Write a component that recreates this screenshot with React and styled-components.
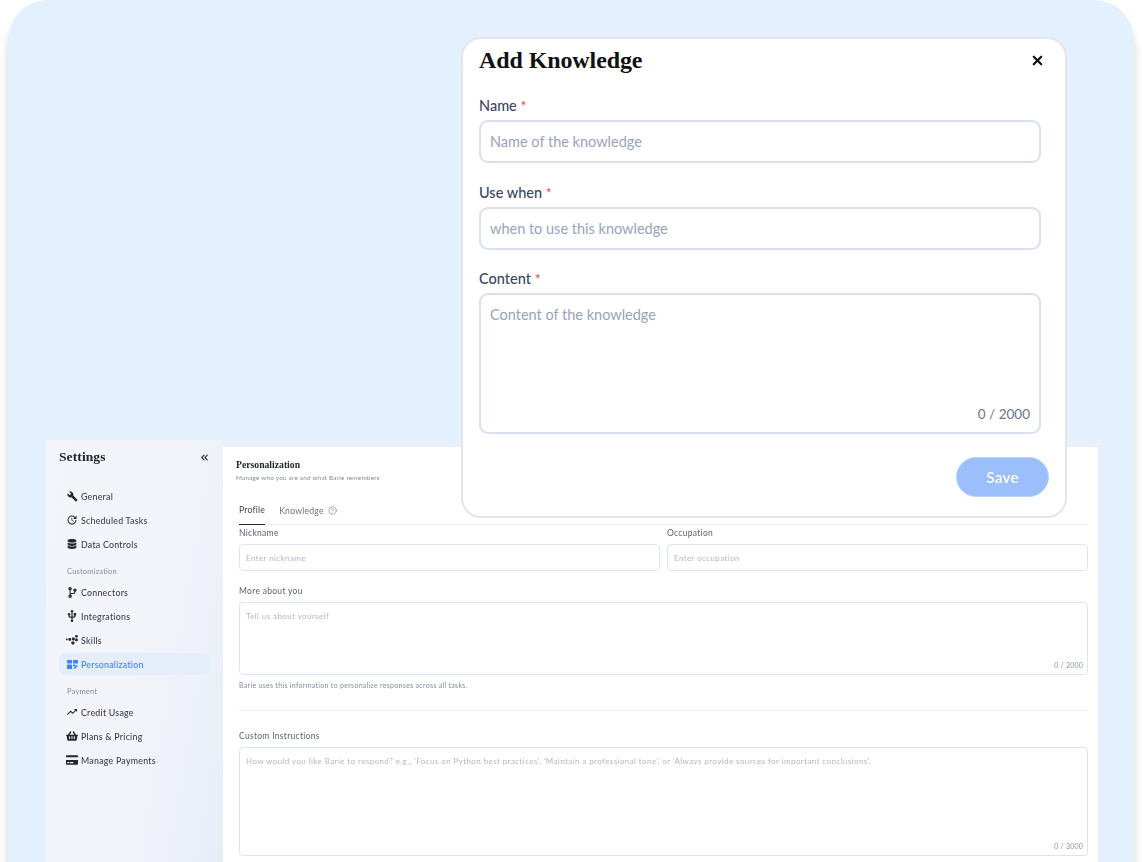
import React from 'react';
import styled, { createGlobalStyle } from 'styled-components';
import { MdBuild, MdUpdate, MdUsb, MdTrendingUp } from 'react-icons/md';
import { FaDatabase, FaCodeBranch, FaShoppingBasket, FaCreditCard } from 'react-icons/fa';
import { CircleHelp, ChevronsLeft, X } from 'lucide-react';

const UI_FONT = `Lato, 'Noto Sans', sans-serif`;
const TITLE_FONT = `'Liberation Serif', serif`;

const GlobalStyle = createGlobalStyle`
  html, body {
    margin: 0;
    height: 862px;
    background: #fff;
    overflow: hidden;
    font-family: ${UI_FONT};
  }
  * { box-sizing: border-box; }
`;

const Frame = styled.div`
  position: relative;
  width: 1126px;
  height: 862px;
  margin-left: 8px;
  padding: 440px 36px 0 38px;
  background: #e3f0fe;
  border-radius: 40px 40px 0 0;
  box-shadow: 0 12px 8px rgba(120, 120, 130, 0.35);
`;

/* the app behind the modal is a scaled down shot, so its text is soft */
const Window = styled.div`
  display: flex;
  height: 422px;
  background: #eaf0fa;
  filter: blur(0.4px);
`;

const Sidebar = styled.aside`
  width: 177px;
  flex-shrink: 0;
  padding: 10px 13px 0;
  background: linear-gradient(100deg, #f4f5fa 0%, #f2f4fa 55%, #e8edf8 100%);
`;

const SidebarHead = styled.div`
  display: flex;
  align-items: center;
  justify-content: space-between;
  height: 14px;
  margin-bottom: 21px;
  color: #2c3040;
`;

const SidebarTitle = styled.div`
  font-family: ${TITLE_FONT};
  font-size: 13.5px;
  font-weight: 700;
  letter-spacing: 0.1px;
  color: #23262f;
`;

const NavGroup = styled.div`
  display: flex;
  flex-direction: column;
  gap: 2px;
`;

const NavLabel = styled.div`
  height: 12px;
  margin: 11px 0 3px 8px;
  font-size: 7.5px;
  line-height: 12px;
  letter-spacing: 0.2px;
  color: #808aa0;
`;

const NavItem = styled.div`
  display: flex;
  align-items: center;
  height: 22px;
  padding-left: 8px;
  border-radius: 6px;
  font-size: 8.8px;
  font-weight: 500;
  letter-spacing: 0.25px;
  color: ${(props) => (props.$active ? '#3f83f2' : '#3a3f4e')};
  background: ${(props) => (props.$active ? '#e5edfb' : 'transparent')};
`;

const NavIcon = styled.span`
  display: flex;
  align-items: center;
  justify-content: center;
  width: 10px;
  height: 10px;
  margin-right: 4px;
  font-size: 11px;
  color: ${(props) => (props.$active ? '#3f83f2' : '#23262f')};
  svg { flex-shrink: 0; }
`;

const Main = styled.main`
  flex: 1;
  margin-top: 7px;
  padding: 12px 10px 0 13px;
  background: #fff;
`;

const MainTitle = styled.div`
  font-family: ${TITLE_FONT};
  font-size: 9.7px;
  font-weight: 700;
  line-height: 11px;
  color: #23262f;
`;

const MainSub = styled.div`
  margin-top: 3px;
  font-size: 6.4px;
  line-height: 9px;
  letter-spacing: 0.2px;
  color: #808aa0;
`;

const Tabs = styled.div`
  display: flex;
  gap: 14px;
  height: 29px;
  margin: 14px 0 0 3px;
  border-bottom: 1px solid #e9ebf0;
`;

const Tab = styled.div`
  display: flex;
  align-items: center;
  gap: 4px;
  height: 29px;
  padding-bottom: 1px;
  font-size: 8.7px;
  letter-spacing: 0.2px;
  color: ${(props) => (props.$active ? '#3a3f4e' : '#6b7385')};
  border-bottom: ${(props) => (props.$active ? '1px solid #23262f' : 'none')};
`;

const Form = styled.div`
  margin-left: 3px;
`;

const FieldRow = styled.div`
  display: grid;
  grid-template-columns: 1fr 1fr;
  gap: 7px;
  margin-bottom: 13px;
`;

const FieldLabel = styled.div`
  height: 14px;
  margin: 1px 0 4px;
  font-size: 8.5px;
  line-height: 14px;
  letter-spacing: 0.3px;
  color: #5a6275;
`;

const SmallInput = styled.input`
  display: block;
  width: 100%;
  height: 27px;
  padding: 0 6px;
  border: 1px solid #dfe5ee;
  border-radius: 4px;
  background: #fff;
  font-family: ${UI_FONT};
  font-size: 8px;
  letter-spacing: 0.4px;
  &::placeholder { color: #aeb7c8; opacity: 1; }
`;

const AreaBox = styled.div`
  position: relative;
  height: ${(props) => props.$height}px;
`;

const SmallArea = styled.textarea`
  display: block;
  width: 100%;
  height: 100%;
  padding: 7.5px 6px;
  resize: none;
  border: 1px solid #dfe5ee;
  border-radius: 4px;
  background: #fff;
  font-family: ${UI_FONT};
  font-size: 8px;
  line-height: 11px;
  letter-spacing: 0.41px;
  &::placeholder { color: #aeb7c8; opacity: 1; }
`;

const SmallCount = styled.span`
  position: absolute;
  right: 5px;
  bottom: 6px;
  font-size: 7px;
  letter-spacing: 0.2px;
  color: #8a93a6;
`;

const Hint = styled.div`
  margin-top: 5px;
  font-size: 7px;
  line-height: 10px;
  letter-spacing: 0.3px;
  color: #808aa0;
`;

const Divider = styled.div`
  height: 1px;
  margin: 20px 0 18px;
  background: #eceef2;
`;

const Modal = styled.section`
  position: absolute;
  left: 453px;
  top: 37px;
  width: 606px;
  height: 481px;
  padding: 0 16px;
  background: #fff;
  border: 2px solid #e4e5e8;
  border-radius: 20px;
`;

const ModalHead = styled.div`
  display: flex;
  align-items: center;
  justify-content: space-between;
  height: 42px;
  margin-bottom: 15px;
`;

const ModalTitle = styled.h2`
  margin: 0;
  font-family: ${TITLE_FONT};
  font-size: 24px;
  font-weight: 700;
  letter-spacing: -0.1px;
  color: #111;
`;

const CloseIcon = styled.span`
  display: flex;
  margin-right: 4px;
  color: #111;
`;

const ModalField = styled.div`
  width: 562px;
  margin-bottom: 19.5px;
`;

const ModalLabel = styled.label`
  display: block;
  height: 20px;
  margin-bottom: 4px;
  font-size: 14.5px;
  font-weight: 500;
  line-height: 20px;
  color: #3c4560;
`;

const Required = styled.span`
  margin-left: 4px;
  font-size: 13px;
  color: #ef3b3b;
`;

const ModalInput = styled.input`
  display: block;
  width: 100%;
  height: 43px;
  padding: 0 9px;
  border: 2px solid #d8e0ef;
  border-radius: 9px;
  background: #fff;
  font-family: ${UI_FONT};
  font-size: 14.5px;
  &::placeholder { color: #97a3bb; opacity: 1; }
`;

const ModalAreaBox = styled.div`
  position: relative;
  height: 141px;
`;

const ModalArea = styled(ModalInput).attrs({ as: 'textarea' })`
  height: 100%;
  padding: 10px 9px;
  resize: none;
  line-height: 20px;
`;

const ModalCount = styled.span`
  position: absolute;
  right: 11px;
  bottom: 12px;
  font-size: 13.5px;
  color: #6b7385;
`;

const ModalFoot = styled.div`
  display: flex;
  justify-content: flex-end;
  width: 570px;
  margin-top: 23px;
`;

const SaveButton = styled.button`
  width: 93px;
  height: 40px;
  border: 1px solid #b7d2fb;
  border-radius: 20px;
  background: #9abffa;
  font-family: ${UI_FONT};
  font-size: 15px;
  font-weight: 500;
  letter-spacing: 0.4px;
  color: #fff;
`;

// no icon package has these two at this shape
const SkillsIcon = () => (
  <svg width="12" height="10" viewBox="0 0 12 10" fill="currentColor">
    <rect x="0" y="3.6" width="1.6" height="1.6" rx="0.5" />
    <rect x="2.4" y="3" width="2.8" height="2.8" rx="0.8" />
    <rect x="6" y="2.6" width="2.8" height="2.8" rx="0.8" />
    <rect x="5.4" y="6.4" width="3" height="3" rx="0.8" />
    <rect x="9.2" y="0" width="2.6" height="2.6" rx="0.8" />
    <rect x="9.2" y="3.6" width="2.6" height="2.6" rx="0.8" />
  </svg>
);

const PersonalizeIcon = () => (
  <svg width="11" height="9" viewBox="0 0 11 9" fill="currentColor">
    <rect x="0" y="0" width="5" height="3.6" rx="0.6" />
    <rect x="6" y="0" width="5" height="3.6" rx="0.6" />
    <rect x="0" y="4.6" width="5" height="4.4" rx="0.6" />
    <rect x="6" y="4.6" width="2.6" height="2" rx="0.4" />
    <path d="M6.6 9 L6.6 8 L9.8 5 L10.8 6 L7.6 9 Z" />
  </svg>
);

const mainNav = [
  { label: 'General', icon: <MdBuild /> },
  { label: 'Scheduled Tasks', icon: <MdUpdate size={12} /> },
  { label: 'Data Controls', icon: <FaDatabase size={10} /> },
];
const customNav = [
  { label: 'Connectors', icon: <FaCodeBranch size={11} /> },
  { label: 'Integrations', icon: <MdUsb size={14} /> },
  { label: 'Skills', icon: <SkillsIcon /> },
  { label: 'Personalization', icon: <PersonalizeIcon />, active: true },
];
const paymentNav = [
  { label: 'Credit Usage', icon: <MdTrendingUp size={12} /> },
  { label: 'Plans & Pricing', icon: <FaShoppingBasket size={12} /> },
  { label: 'Manage Payments', icon: <FaCreditCard size={12} /> },
];

const renderNav = (items) => (
  <NavGroup>
    {items.map((item) => (
      <NavItem key={item.label} $active={item.active}>
        <NavIcon $active={item.active}>{item.icon}</NavIcon>
        {item.label}
      </NavItem>
    ))}
  </NavGroup>
);

export default function App() {
  return (
    <>
      <GlobalStyle />
      <Frame>
        <Window>
          <Sidebar>
            <SidebarHead>
              <SidebarTitle>Settings</SidebarTitle>
              <ChevronsLeft size={11} strokeWidth={2.5} />
            </SidebarHead>
            {renderNav(mainNav)}
            <NavLabel>Customization</NavLabel>
            {renderNav(customNav)}
            <NavLabel>Payment</NavLabel>
            {renderNav(paymentNav)}
          </Sidebar>
          <Main>
            <MainTitle>Personalization</MainTitle>
            <MainSub>Manage who you are and what Barie remembers</MainSub>
            <Tabs>
              <Tab $active>Profile</Tab>
              <Tab>
                Knowledge
                <CircleHelp size={9} strokeWidth={1.5} />
              </Tab>
            </Tabs>
            <Form>
              <FieldRow>
                <div>
                  <FieldLabel>Nickname</FieldLabel>
                  <SmallInput placeholder="Enter nickname" />
                </div>
                <div>
                  <FieldLabel>Occupation</FieldLabel>
                  <SmallInput placeholder="Enter occupation" />
                </div>
              </FieldRow>
              <FieldLabel>More about you</FieldLabel>
              <AreaBox $height={73}>
                <SmallArea placeholder="Tell us about yourself" />
                <SmallCount>0 / 2000</SmallCount>
              </AreaBox>
              <Hint>Barie uses this information to personalize responses across all tasks.</Hint>
              <Divider />
              <FieldLabel>Custom Instructions</FieldLabel>
              <AreaBox $height={109}>
                <SmallArea placeholder="How would you like Barie to respond? e.g., 'Focus on Python best practices', 'Maintain a professional tone', or 'Always provide sources for important conclusions'." />
                <SmallCount>0 / 3000</SmallCount>
              </AreaBox>
            </Form>
          </Main>
        </Window>
        <Modal>
          <ModalHead>
            <ModalTitle>Add Knowledge</ModalTitle>
            <CloseIcon><X size={15} strokeWidth={3.4} /></CloseIcon>
          </ModalHead>
          <ModalField>
            <ModalLabel>Name<Required>*</Required></ModalLabel>
            <ModalInput placeholder="Name of the knowledge" />
          </ModalField>
          <ModalField>
            <ModalLabel>Use when<Required>*</Required></ModalLabel>
            <ModalInput placeholder="when to use this knowledge" />
          </ModalField>
          <ModalField>
            <ModalLabel>Content<Required>*</Required></ModalLabel>
            <ModalAreaBox>
              <ModalArea placeholder="Content of the knowledge" />
              <ModalCount>0 / 2000</ModalCount>
            </ModalAreaBox>
          </ModalField>
          <ModalFoot>
            <SaveButton>Save</SaveButton>
          </ModalFoot>
        </Modal>
      </Frame>
    </>
  );
}
